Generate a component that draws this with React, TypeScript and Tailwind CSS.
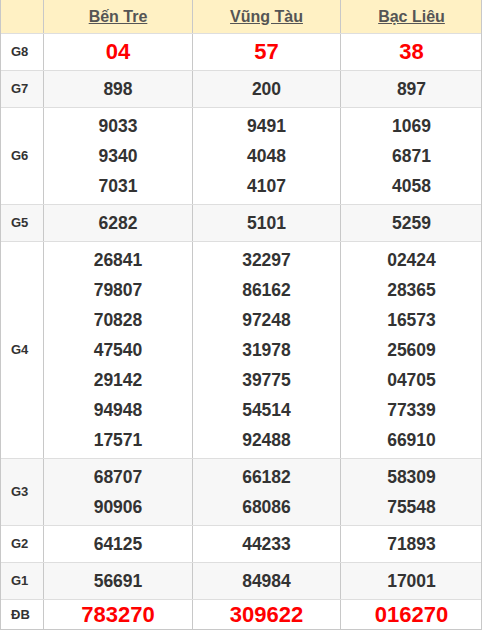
import React from "react";

type Row = { label: string; vals: string[][]; red?: boolean; bg: string; big?: boolean };

const rows: Row[] = [
  { label: "G8", vals: [["04"], ["57"], ["38"]], red: true, bg: "bg-white" },
  { label: "G7", vals: [["898"], ["200"], ["897"]], bg: "bg-[#f7f7f7]" },
  {
    label: "G6",
    vals: [
      ["9033", "9340", "7031"],
      ["9491", "4048", "4107"],
      ["1069", "6871", "4058"],
    ],
    bg: "bg-white",
  },
  { label: "G5", vals: [["6282"], ["5101"], ["5259"]], bg: "bg-[#f7f7f7]" },
  {
    label: "G4",
    vals: [
      ["26841", "79807", "70828", "47540", "29142", "94948", "17571"],
      ["32297", "86162", "97248", "31978", "39775", "54514", "92488"],
      ["02424", "28365", "16573", "25609", "04705", "77339", "66910"],
    ],
    bg: "bg-white",
  },
  {
    label: "G3",
    vals: [
      ["68707", "90906"],
      ["66182", "68086"],
      ["58309", "75548"],
    ],
    bg: "bg-[#f7f7f7]",
  },
  { label: "G2", vals: [["64125"], ["44233"], ["71893"]], bg: "bg-white" },
  { label: "G1", vals: [["56691"], ["84984"], ["17001"]], bg: "bg-[#f7f7f7]" },
  { label: "ĐB", vals: [["783270"], ["309622"], ["016270"]], red: true, big: true, bg: "bg-white" },
];

const widths = ["w-[149px]", "w-[148px]", "w-[142px]"];

export default function App() {
  return (
    <div
      className="w-[482px] bg-white"
      style={{ fontFamily: '"Liberation Sans", Arial, sans-serif' }}
    >
      <div className="border-l border-r border-b border-l-[#c8c8c8] border-r-[#c8c8c8] border-b-[#c8c8c8]">
        {/* header */}
        <div className="flex h-[34px] bg-[#fff1c4] border-b border-[#dedede]">
          <div className="w-[42px] shrink-0" />
          {["Bến Tre", "Vũng Tàu", "Bạc Liêu"].map((n, i) => (
            <div
              key={n}
              className={`${widths[i]} shrink-0 border-l border-[#c8c8c8] flex items-center justify-center text-[16px] font-bold text-[#555] underline`}
            >
              {n}
            </div>
          ))}
        </div>
        {rows.map((r, ri) => (
          <div
            key={r.label}
            className={`flex ${r.bg} ${ri < rows.length - 1 ? "border-b border-[#dedede]" : ""}`}
          >
            <div className="w-[42px] shrink-0 flex items-center pl-[10px] text-[13px] font-bold text-[#333]">
              {r.label}
            </div>
            {r.vals.map((col, ci) => (
              <div
                key={ci}
                className={`${widths[ci]} shrink-0 border-l border-[#c8c8c8] flex flex-col items-center ${r.big ? "py-0" : "py-[3px]"}`}
              >
                {col.map((v) => (
                  <div
                    key={v}
                    className={
                      r.red
                        ? r.big
                          ? "h-[29px] leading-[29px] text-[22px] font-bold text-[#f00]"
                          : "h-[30px] leading-[30px] text-[22px] font-bold text-[#f00]"
                        : "h-[30px] leading-[30px] text-[17.5px] font-bold text-[#333]"
                    }
                  >
                    {v}
                  </div>
                ))}
              </div>
            ))}
          </div>
        ))}
      </div>
    </div>
  );
}
